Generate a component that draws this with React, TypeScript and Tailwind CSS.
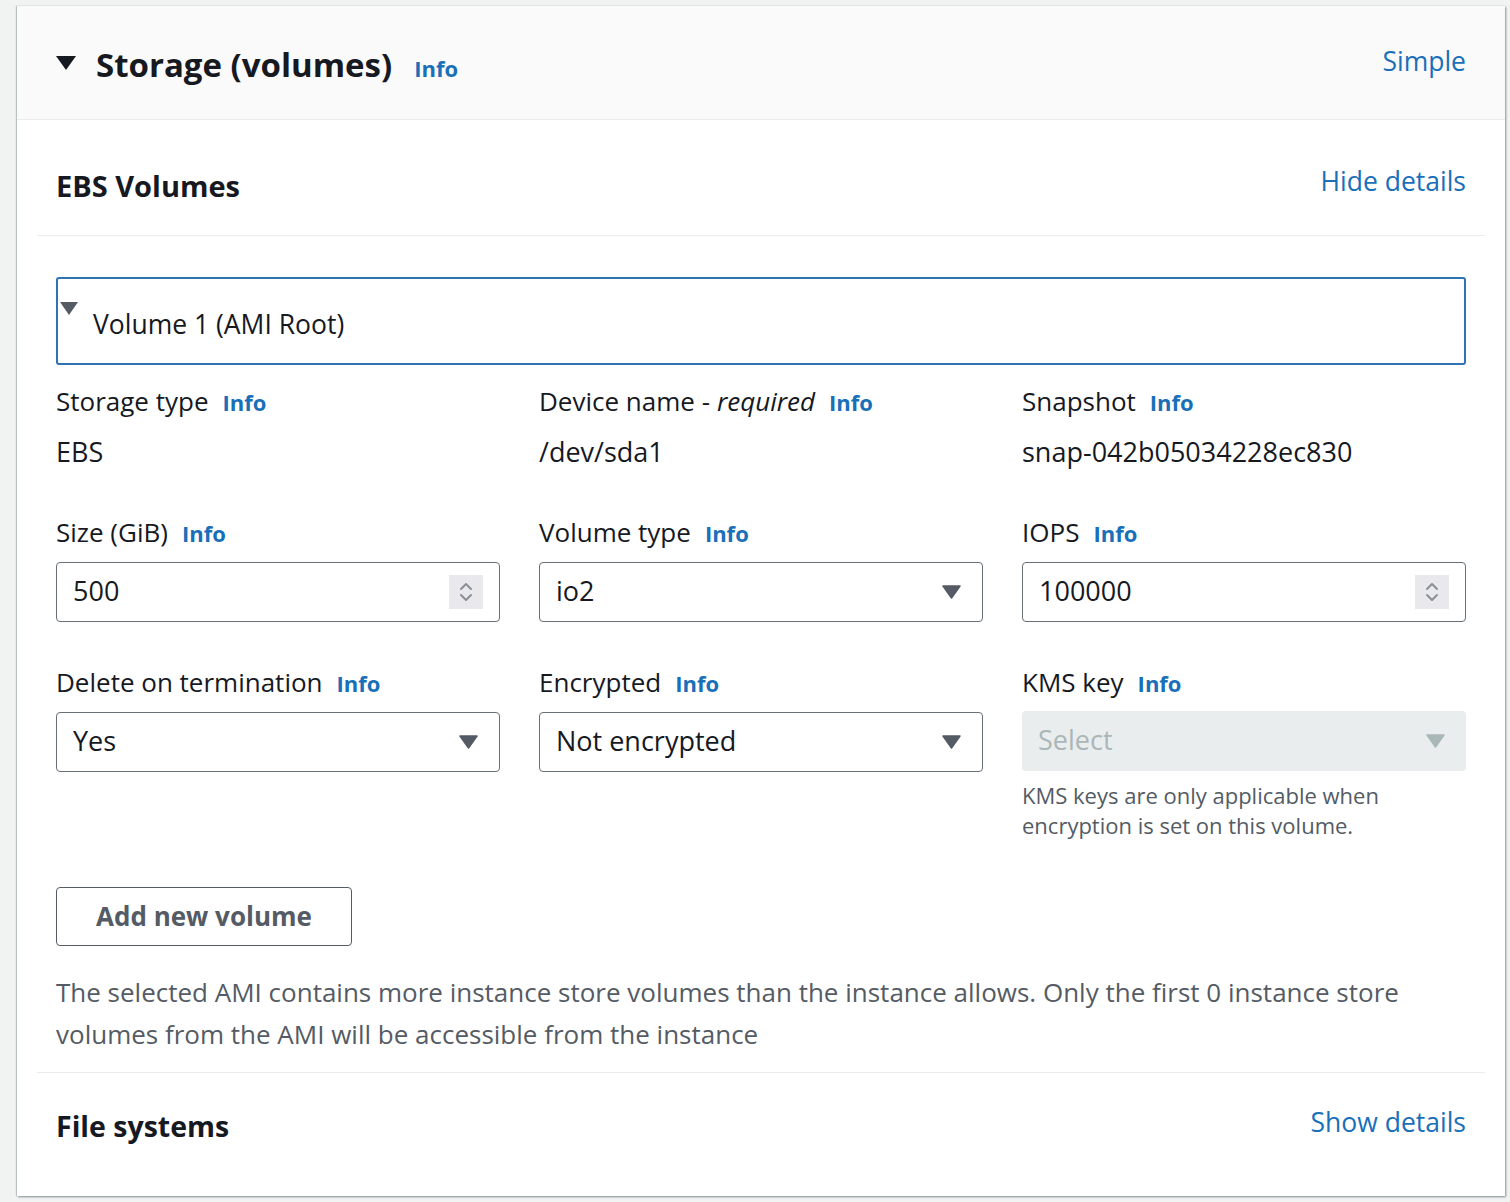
import React from "react";

const font = { fontFamily: '"Open Sans", "Noto Sans", Arial, sans-serif' };

function Info() {
  return <span className="ml-[14px] text-[22px] font-bold text-[#1a6fb9]">Info</span>;
}

function Label({ children }: { children: React.ReactNode }) {
  return (
    <div className="flex items-baseline text-[26px] leading-[36px] text-[#16191f]">
      {children}
      <Info />
    </div>
  );
}

function Caret({ color = "#545b64" }: { color?: string }) {
  return (
    <svg width="19" height="14" viewBox="0 0 19 14">
      <path d="M1 1 L18 1 L9.5 13 Z" fill={color} stroke={color} strokeWidth="1.5" strokeLinejoin="round" />
    </svg>
  );
}

function Spinner() {
  return (
    <div className="flex h-[34px] w-[34px] items-center justify-center bg-[#e9e9ed]">
      <svg width="16" height="26" viewBox="0 0 16 26" fill="none" stroke="#8a8f98" strokeWidth="2" strokeLinecap="round" strokeLinejoin="round">
        <path d="M3 10 L8 5 L13 10" />
        <path d="M3 16 L8 21 L13 16" />
      </svg>
    </div>
  );
}

function NumberInput({ value }: { value: string }) {
  return (
    <div className="mt-[11px] flex h-[60px] items-center justify-between rounded-[4px] border border-[#687078] bg-white pl-[16px] pr-[16px]">
      <span className="text-[27px] text-[#16191f]">{value}</span>
      <Spinner />
    </div>
  );
}

function SelectBox({ value }: { value: string }) {
  return (
    <div className="mt-[11px] flex h-[60px] items-center justify-between rounded-[4px] border border-[#687078] bg-white pl-[16px] pr-[21px]">
      <span className="text-[27px] text-[#16191f]">{value}</span>
      <Caret />
    </div>
  );
}

export default function App() {
  return (
    <div style={font} className="min-h-[1202px] w-[1510px] bg-[#f1f2f2] pl-[17px] pr-[5px] pt-[6px]">
      <div className="w-[1488px] bg-white shadow-[1px_1px_2px_rgba(0,28,36,0.45),-1px_0_1px_rgba(0,28,36,0.2)]">
        {/* Header */}
        <div className="flex h-[114px] items-center justify-between border-b border-[#eaeded] bg-[#fafafa] pl-[38px] pr-[39px] pt-[4px]">
          <div className="flex items-center">
            <svg width="22" height="16" viewBox="0 0 22 16" className="mt-[-4px]">
              <path d="M1 1 L21 1 L11 15 Z" fill="#16191f" />
            </svg>
            <span className="ml-[19px] text-[33px] font-bold text-[#16191f]">Storage (volumes)</span>
            <span className="ml-[22px] mt-[8px] text-[22px] font-bold text-[#1a6fb9]">Info</span>
          </div>
          <span className="mt-[-6px] text-[26.5px] text-[#1a6fb9]">Simple</span>
        </div>

        {/* EBS volumes */}
        <div className="px-[20px]">
          <div className="flex h-[116px] items-center justify-between border-b border-[#eaeded] pl-[19px] pr-[19px] pt-[17px]">
            <span className="text-[29px] font-bold text-[#16191f]">EBS Volumes</span>
            <span className="mt-[-8px] text-[26.5px] text-[#1a6fb9]">Hide details</span>
          </div>

          <div className="px-[19px]">
            <div className="mt-[41px] flex h-[88px] items-start rounded-[3px] border-2 border-[#2f73b5] pt-[20px]">
              <svg width="20" height="16" viewBox="0 0 20 16" className="mt-[2px] ml-[1px]">
                <path d="M1 1 L19 1 L10 14 Z" fill="#545b64" />
              </svg>
              <span className="ml-[14px] mt-[6px] text-[26.5px] text-[#16191f]">Volume 1 (AMI Root)</span>
            </div>

            <div className="mt-[18px] grid grid-cols-3 gap-x-[39px]">
              <div>
                <Label>Storage type</Label>
                <div className="mt-[12px] text-[27px] text-[#16191f]">EBS</div>
              </div>
              <div>
                <Label>
                  Device name - <i className="ml-[7px]">required</i>
                </Label>
                <div className="mt-[12px] text-[27px] text-[#16191f]">/dev/sda1</div>
              </div>
              <div>
                <Label>Snapshot</Label>
                <div className="mt-[12px] text-[27px] text-[#16191f]">snap-042b05034228ec830</div>
              </div>
            </div>

            <div className="mt-[41px] grid grid-cols-3 gap-x-[39px]">
              <div>
                <Label>Size (GiB)</Label>
                <NumberInput value="500" />
              </div>
              <div>
                <Label>Volume type</Label>
                <SelectBox value="io2" />
              </div>
              <div>
                <Label>IOPS</Label>
                <NumberInput value="100000" />
              </div>
            </div>

            <div className="mt-[42px] grid grid-cols-3 gap-x-[39px]">
              <div>
                <Label>Delete on termination</Label>
                <SelectBox value="Yes" />
              </div>
              <div>
                <Label>Encrypted</Label>
                <SelectBox value="Not encrypted" />
              </div>
              <div>
                <Label>KMS key</Label>
                <div className="mt-[10px] flex h-[60px] items-center justify-between rounded-[4px] bg-[#eaeded] pl-[16px] pr-[21px]">
                  <span className="text-[27px] text-[#aab7b8]">Select</span>
                  <Caret color="#aab7b8" />
                </div>
                <div className="mt-[9px] text-[22px] leading-[30px] text-[#545b64]">
                  KMS keys are only applicable when
                  <br />
                  encryption is set on this volume.
                </div>
              </div>
            </div>

            <button className="mt-[47px] flex h-[59px] w-[296px] items-center justify-center rounded-[4px] border border-[#545b64] bg-white text-[26px] font-bold text-[#545b64]">
              Add new volume
            </button>

            <p className="mt-[25px] pb-[17px] text-[26px] leading-[42px] text-[#545b64]">
              The selected AMI contains more instance store volumes than the instance allows. Only the first 0 instance store
              volumes from the AMI will be accessible from the instance
            </p>
          </div>

          <div className="flex h-[124px] items-start justify-between border-t border-[#eaeded] pl-[19px] pr-[19px] pt-[32px]">
            <span className="text-[28.5px] font-bold text-[#16191f]">File systems</span>
            <span className="mt-[-2px] text-[26.5px] text-[#1a6fb9]">Show details</span>
          </div>
        </div>
      </div>
    </div>
  );
}
